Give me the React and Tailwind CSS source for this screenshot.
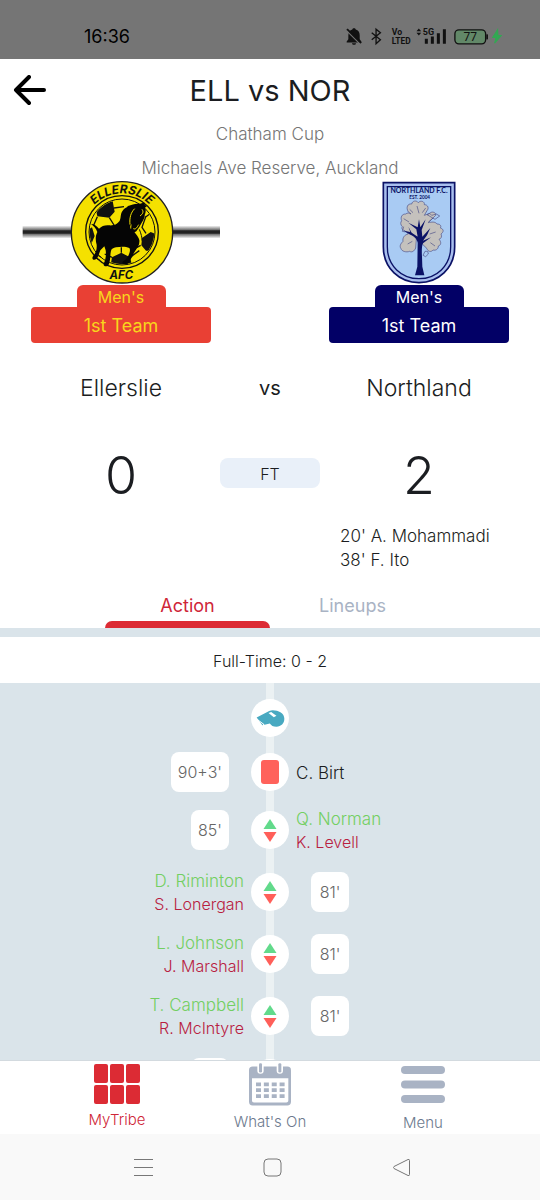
import React, { useState } from 'react';

const events = [
  { id: 1, type: 'whistle' },
  { id: 2, type: 'red', side: 'away', time: "90+3'", player: 'C. Birt' },
  { id: 3, type: 'sub', side: 'away', time: "85'", on: 'Q. Norman', off: 'K. Levell' },
  { id: 4, type: 'sub', side: 'home', time: "81'", on: 'D. Riminton', off: 'S. Lonergan' },
  { id: 5, type: 'sub', side: 'home', time: "81'", on: 'L. Johnson', off: 'J. Marshall' },
  { id: 6, type: 'sub', side: 'home', time: "81'", on: 'T. Campbell', off: 'R. McIntyre' },
  { id: 7, type: 'sub', side: 'away', time: '', on: '', off: '' },
];

function StatusBar() {
  return (
    <div className="flex h-[59px] shrink-0 items-center justify-between bg-[#757575] pt-[14px] pr-[38px] pl-[84px] text-black">
      <span className="text-lg leading-6 font-normal">16:36</span>
      <svg viewBox="225 80 470 56" className="h-[19px] w-[157px]" role="img" aria-label="Phone status">
        <g fill="#111">
          <path d="M252 83c-4 0-5 2-5 4-8 2-12 9-12 17v12l-5 7v3h44v-3l-5-7v-12c0-8-4-15-12-17 0-2-1-4-5-4z" />
          <path d="M246 128h12c0 3-3 5-6 5s-6-2-6-5z" />
          <path d="M229 88l4-4 42 42-4 4z" />
        </g>
        <path d="M230 91l40 40" stroke="#757575" strokeWidth="3" />
        <path d="M305 97l26 21-13 12V86l13 11-26 21" fill="none" stroke="#111" strokeWidth="4" />
        <text x="365" y="104" fontSize="26" fontWeight="700" fontFamily="Roboto, sans-serif" fill="#111">Vo</text>
        <text x="365" y="130" fontSize="25" fontWeight="700" fontFamily="Roboto, sans-serif" fill="#111">LTED</text>
        <path d="M439 92l7-8 7 8zM439 97l7 8 7-8z" fill="#111" />
        <text x="458" y="104" fontSize="27" fontWeight="700" fontFamily="Roboto, sans-serif" fill="#111">5G</text>
        <path d="M464 115h9v15h-9zM482 108h9v22h-9zM500 98h9v32h-9zM518 86h9v44h-9z" fill="#111" />
        <rect x="554" y="88" width="92" height="42" rx="12" fill="#628868" stroke="#111" strokeWidth="4" />
        <rect x="648" y="101" width="5" height="16" rx="2" fill="#111" />
        <text x="600" y="121" fontSize="36" textAnchor="middle" fontWeight="400" fontFamily="Roboto, sans-serif" fill="#111">77</text>
        <path d="M682 87l-15 24h10l-4 17 20-23h-10z" fill="#33a853" stroke="#33a853" strokeWidth="3" />
      </svg>
    </div>
  );
}

function EllerslieCrest() {
  return (
    <svg viewBox="6 15 594 309" className="h-[103px] w-full overflow-visible" role="img" aria-label="Ellerslie AFC crest">
      <defs>
        <linearGradient id="bar" x1="0" y1="0" x2="0" y2="1">
          <stop offset="0" stopColor="#eee" />
          <stop offset="0.3" stopColor="#777" />
          <stop offset="0.4" stopColor="#222" />
          <stop offset="0.6" stopColor="#222" />
          <stop offset="0.7" stopColor="#777" />
          <stop offset="1" stopColor="#eee" />
        </linearGradient>
        <path id="crestTop" d="M189 169a117 117 0 0 1 234 0" />
        <clipPath id="ball">
          <circle cx="306" cy="168" r="97" />
        </clipPath>
      </defs>
      <rect x="8" y="150" width="592" height="36" fill="url(#bar)" />
      <circle cx="306" cy="169" r="152" fill="#f5e100" stroke="#222" strokeWidth="4" />
      <circle cx="306" cy="168" r="109" fill="#f5e100" stroke="#111" strokeWidth="4" />
      <circle cx="306" cy="168" r="99" fill="#f5e100" stroke="#111" strokeWidth="3" />
      <g clipPath="url(#ball)">
        <path d="M226 93l52-18 6 32-16 18-36-4zM366 186l26-18 26 10-10 46-30 0-14-16zM276 244l28-14 26 14 8 30-68 4zM196 166l20-12 8 26-10 24z" fill="#111" />
        <path d="M282 96l30-4M268 125l14 22M232 122l-12 28M378 120l-12 34 12 18M392 112l-16 12M304 230v-16M276 244l-22-10M330 244l28-20M362 208l-14 8" fill="none" stroke="#111" strokeWidth="4" />
      </g>
      {/* horse */}
      <path
        d="M213 144c10 0 16 6 24 14 8-8 18-11 30-10 14 1 24-2 31-12 6-10 2-22 10-32 5-8 12-8 16-14 12-2 22-8 32-6 8-2 16-6 19-3-3 4-1 7 6 9l-6 5c4 8 2 15-1 22 1 8-4 14-8 22-5 10-11 19-17 27-6 5-14 4-16-3 0-7 2-13 1-19-4 5-4 9-2 14 10 8 22 20 26 34 2 14-6 22-12 32-6 8-8 18-14 26-3 9-8 15-16 15-10 0-12-7-4-11 8-4 12-12 16-22 2-6 3-12 0-16-12-6-28-4-40-2-8 2-13 4-15 10-3 12-1 26-6 40-4 10-18 9-16-1 6-12 8-26 6-40l-4-12-12 12c-4 10-6 20-12 26-8 5-14 1-11-7 10-10 13-22 12-36-4-14-4-26 2-38-4-10-10-18-19-24z"
        fill="#050505"
      />
      <path d="M344 98c-12 12-16 28-14 48M366 100c6 8 2 14-6 20M340 158c8 4 12-6 16-12" fill="none" stroke="#f5e100" strokeWidth="3" />
      <path d="M230 236l14 8M228 246l12 7M358 160c6 16 8 22 8 34" stroke="#111" strokeWidth="3" fill="none" />
      <text fontSize="36" fontWeight="700" fontStyle="italic" fontFamily="Inter, sans-serif" fill="#111">
        <textPath href="#crestTop" startOffset="50%" textAnchor="middle">ELLERSLIE</textPath>
      </text>
      <text x="304" y="308" fontSize="34" fontWeight="700" fontStyle="italic" textAnchor="middle" fontFamily="Inter, sans-serif" fill="#111">AFC</text>
    </svg>
  );
}

function NorthlandCrest() {
  return (
    <svg viewBox="185 15 222 309" className="h-[103px] w-[74px]" role="img" aria-label="Northland F.C. crest">
      <path d="M189 20h214v192c0 66-50 108-107 108s-107-42-107-108z" fill="#a9bfee" stroke="#0b1266" strokeWidth="5" />
      <path d="M201 32h190v180c0 58-43 96-95 96s-95-38-95-96z" fill="#a9cbf3" stroke="#0b1266" strokeWidth="4" />
      <text x="296" y="52" fontSize="21" fontWeight="700" textAnchor="middle" fontFamily="Lato, sans-serif" fill="#0b1266">NORTHLAND F.C.</text>
      <text x="298" y="69" fontSize="14" fontWeight="700" textAnchor="middle" fontFamily="Lato, sans-serif" fill="#0b1266">EST. 2004</text>
      <g fill="#c4c1bd" stroke="#4c4f86" strokeWidth="2">
        <path d="M264 108c-8-14-2-26 10-24 2-10 14-12 20-4 6-8 20-4 18 6 12 0 14 12 8 18l-8 14 16-6c8-8 20-2 18 6l-12 12-10 10c10-2 20-4 26 4 10 0 14 6 10 12 12 4 10 12 2 18 4 8 0 14-6 16 8 8 6 18-2 20 0 10-8 14-16 12-6 8-16 4-18-4l-14-14-4-22-8-2-6 10-2 26c-4 10-12 14-18 10-10 4-24 0-26-8-6-8 0-16 6-22-2-10 4-20 16-22l-10-10c-6 0-12-6-8-12-6-6-6-12-2-18-4-10 0-20 12-20 4-4 12-4 16 0z" />
        <path d="M250 152l-4 14 10 2M314 226l-6 12 8 4 8-8-2-8zM320 116l8-4 6 6 14-4 10 6-14 10z" fill="none" />
        <path d="M268 100l10 10M290 90l6 22M316 96l-10 14M250 128l16 10M338 126l-14 12M346 168l-18 6M262 204l14-8M330 200l14 10" fill="none" />
      </g>
      <path
        d="M284 298l7-26 1-72c-2-12-12-20-22-24l-20-12 20 4-6-16 10 18 18 12-4-22-24-20 28 14 4-24 4 24 16-24-12 32 2 20 24-26-10 22-12 16 24-10-24 18c-4 8-4 24-3 40l1 30 6 26z"
        fill="#0b1266"
      />
    </svg>
  );
}

function TeamBadge({ crest, squad, team, color }) {
  return (
    <div className="flex flex-col items-center">
      {crest}
      <div className={`mt-px h-[22px] w-[89px] rounded-t-md text-center text-base leading-6 font-normal ${color}`}>{squad}</div>
      <div className={`h-9 w-[180px] rounded text-center text-lg leading-[38px] font-normal ${color}`}>{team}</div>
    </div>
  );
}

function EventIcon({ type }) {
  return (
    <div className="flex size-[38px] items-center justify-center rounded-full bg-white">
      {type === 'whistle' && (
        <svg viewBox="346 84 88 56" className="h-[19px] w-[29px]" aria-hidden="true">
          <path d="M348 109l38-20c12-4 26 0 34 4 8 4 12 12 12 20 0 14-10 24-24 24-10 0-16-4-20-10l-16 4-4-3-2 5z" fill="#48a9c1" />
          <path d="M384 95l8-3 16 12-8 4z" fill="#fff" />
          <path d="M350 115l20 15" stroke="#fff" strokeWidth="3" />
        </svg>
      )}
      {type === 'red' && <div className="h-6 w-[18px] rounded-[3px] bg-[#ff625b]" />}
      {type === 'sub' && (
        <svg viewBox="0 0 14 24" className="h-6 w-3.5" aria-hidden="true">
          <path d="M7 1l6.500 10H.5z" fill="#62da8b" />
          <path d="M7 24L.5 14h13z" fill="#ff5f59" />
        </svg>
      )}
    </div>
  );
}

function EventNames({ event }) {
  if (event.player) {
    return <div className="pt-0.5 text-[17px] leading-6 text-[#1b1d21]">{event.player}</div>;
  }
  return (
    <div>
      <div className="text-[17px] leading-6 text-[#73cf62]">{event.on}</div>
      <div className="text-base leading-[22px] text-[#b8203f]">{event.off}</div>
    </div>
  );
}

function EventRow({ event }) {
  const names = <EventNames event={event} />;
  const time = (
    <div className="flex h-10 min-w-[38px] items-center justify-center rounded-lg bg-white px-[7px] text-base text-[#666]">
      {event.time}
    </div>
  );
  const home = event.side === 'home';
  const height = event.type === 'sub' ? 'h-[62px]' : 'h-[54px]';

  return (
    <li className={`grid shrink-0 grid-cols-[1fr_38px_1fr] items-center ${height}`}>
      <div className={home ? 'pr-[7px] text-right' : 'flex justify-end pr-[22px]'}>
        {event.side && (home ? names : time)}
      </div>
      <EventIcon type={event.type} />
      <div className={home ? 'flex pl-[22px]' : 'pl-[7px]'}>
        {event.side && (home ? time : names)}
      </div>
    </li>
  );
}

function BottomNav() {
  return (
    <nav className="grid h-[74px] shrink-0 grid-cols-[1fr_72px_1fr] border-t border-[#d3dadf] bg-white text-[15px] leading-5 text-[#6c7a8e]">
      <a href="#mytribe" className="flex flex-col items-center pt-[3px] text-[#cf2638]">
        <svg viewBox="0 0 46 40" className="h-10 w-[46px]" fill="#dc2b34" aria-hidden="true">
          <rect x="0" y="0" width="14" height="19" rx="2" />
          <rect x="16" y="0" width="14" height="19" rx="2" />
          <rect x="32" y="0" width="14" height="19" rx="2" />
          <rect x="0" y="21" width="14" height="19" rx="2" />
          <rect x="16" y="21" width="14" height="19" rx="2" />
          <rect x="32" y="21" width="14" height="19" rx="2" />
        </svg>
        <span className="mt-1.5">MyTribe</span>
      </a>
      <a href="#whatson" className="flex flex-col items-center pt-0.5 whitespace-nowrap">
        <svg viewBox="568 38 126 128" className="h-[43px] w-[42px]" aria-hidden="true">
          <rect x="568" y="48" width="126" height="117" rx="11" fill="#a9b3c4" />
          <path d="M577 83h109v67c0 4-3 6-6 6h-97c-4 0-6-3-6-6z" fill="#fff" />
          <rect x="593" y="34" width="19" height="36" rx="9" fill="#fff" />
          <rect x="651" y="34" width="19" height="36" rx="9" fill="#fff" />
          <rect x="598" y="38" width="9" height="28" rx="4" fill="#a9b3c4" />
          <rect x="656" y="38" width="9" height="28" rx="4" fill="#a9b3c4" />
          <path d="M589 101.500h86M589 119h86M589 137h86" stroke="#a9b3c4" strokeWidth="11" strokeDasharray="15 8.600" />
        </svg>
        <span className="mt-1.5">What's On</span>
      </a>
      <a href="#menu" className="flex flex-col items-center pt-[5px]">
        <svg viewBox="0 0 44 37" className="h-[37px] w-11" fill="#a9b3c4" aria-hidden="true">
          <rect x="0" y="0" width="44" height="8" rx="4" />
          <rect x="0" y="14.500" width="44" height="8" rx="4" />
          <rect x="0" y="29" width="44" height="8" rx="4" />
        </svg>
        <span className="mt-2.5">Menu</span>
      </a>
    </nav>
  );
}

function SystemNav() {
  return (
    <div className="flex h-[66px] shrink-0 items-center justify-between bg-[#f9f9f9] pr-[129px] pl-[134px]">
      <button type="button" aria-label="Recent apps">
        <svg viewBox="0 0 19 19" className="size-[19px]" stroke="#777" aria-hidden="true">
          <path d="M0 1.500h19M0 9.500h19M0 17.500h19" />
        </svg>
      </button>
      <button type="button" aria-label="Home">
        <svg viewBox="0 0 19 19" className="size-[19px]" stroke="#777" fill="none" aria-hidden="true">
          <rect x="1" y="1" width="17" height="17" rx="4" />
        </svg>
      </button>
      <button type="button" aria-label="Back">
        <svg viewBox="0 0 19 19" className="size-[19px]" stroke="#777" fill="none" strokeLinejoin="round" aria-hidden="true">
          <path d="M16 1.500L2 8.500q-1 1 0 2l14 7q1.500.5 1.500-1v-14q0-1.500-1.500-1z" />
        </svg>
      </button>
    </div>
  );
}

export default function App() {
  const [tab, setTab] = useState('action');

  return (
    <div className="flex h-screen flex-col bg-white font-[Inter,sans-serif] font-light text-[#1b1d21]">
      <StatusBar />
      <header className="grid grid-cols-[60px_1fr_60px] pt-3 pb-px text-center">
        <button type="button" aria-label="Go back" className="mt-1 ml-3 flex h-8 w-9 items-center justify-center">
          <svg viewBox="0 0 34 32" className="h-8 w-[34px]" fill="none" stroke="#000" strokeWidth="4" strokeLinecap="round" strokeLinejoin="round" aria-hidden="true">
            <path d="M31 15H3M16 2L3 15l13 13" />
          </svg>
        </button>
        <h1 className="text-[29px] leading-10 font-normal">ELL vs NOR</h1>
        <div className="col-span-3 mt-[11px] text-[17px] leading-6 text-[#757575]">Chatham Cup</div>
        <div className="col-span-3 mt-2.5 text-[17px] leading-6 text-[#757575]">Michaels Ave Reserve, Auckland</div>
      </header>

      <section className="grid grid-cols-[1fr_100px_1fr] px-[22px] text-center">
        <TeamBadge crest={<EllerslieCrest />} squad="Men's" team="1st Team" color="bg-[#e94034] text-[#f8d51c]" />
        <div />
        <TeamBadge crest={<NorthlandCrest />} squad="Men's" team="1st Team" color="bg-[#020066] text-white" />
      </section>

      <section className="grid grid-cols-[1fr_100px_1fr] items-center px-[22px] text-center">
        <h2 className="mt-[29px] text-[23px] leading-8">Ellerslie</h2>
        <span className="mt-[29px] text-xl leading-8 font-normal">vs</span>
        <h2 className="mt-[29px] text-[23px] leading-8">Northland</h2>
        <div className="mt-10 text-[52px] leading-[64px]">0</div>
        <div className="mt-[34px] h-[30px] rounded-lg bg-[#e9f0f9] text-base leading-8">FT</div>
        <div className="mt-10 text-[52px] leading-[64px]">2</div>
        <ul className="col-start-3 mt-4 pl-5 text-left text-[17px] leading-6">
          <li>20' A. Mohammadi</li>
          <li>38' F. Ito</li>
        </ul>
      </section>

      <div role="tablist" className="mt-[19px] grid w-[330px] grid-cols-2 self-center text-lg font-normal">
        <button
          type="button"
          role="tab"
          aria-selected={tab === 'action'}
          onClick={() => setTab('action')}
          className={tab === 'action' ? 'text-[#cf2638]' : 'text-[#a9b3c4]'}
        >
          <span className="block leading-[30px]">Action</span>
          <span className={tab === 'action' ? 'block h-[7px] rounded-t-lg bg-[#dc2b34]' : 'block h-[7px]'} />
        </button>
        <button
          type="button"
          role="tab"
          aria-selected={tab === 'lineups'}
          onClick={() => setTab('lineups')}
          className={tab === 'lineups' ? 'text-[#cf2638]' : 'text-[#a9b3c4]'}
        >
          <span className="block leading-[30px]">Lineups</span>
          <span className={tab === 'lineups' ? 'block h-[7px] rounded-t-lg bg-[#dc2b34]' : 'block h-[7px]'} />
        </button>
      </div>

      <div className="border-t-9 border-[#dae4ea] pt-0.5 text-center text-base leading-11">Full-Time: 0 - 2</div>

      <main className="min-h-0 flex-1 overflow-hidden bg-[#dae4ea]">
        <ol className="flex flex-col bg-[linear-gradient(#ebf1f3,#ebf1f3)] bg-[length:8px_100%] bg-center bg-no-repeat pt-2">
          {events.map((event) => (
            <EventRow key={event.id} event={event} />
          ))}
        </ol>
      </main>

      <BottomNav />
      <SystemNav />
    </div>
  );
}
